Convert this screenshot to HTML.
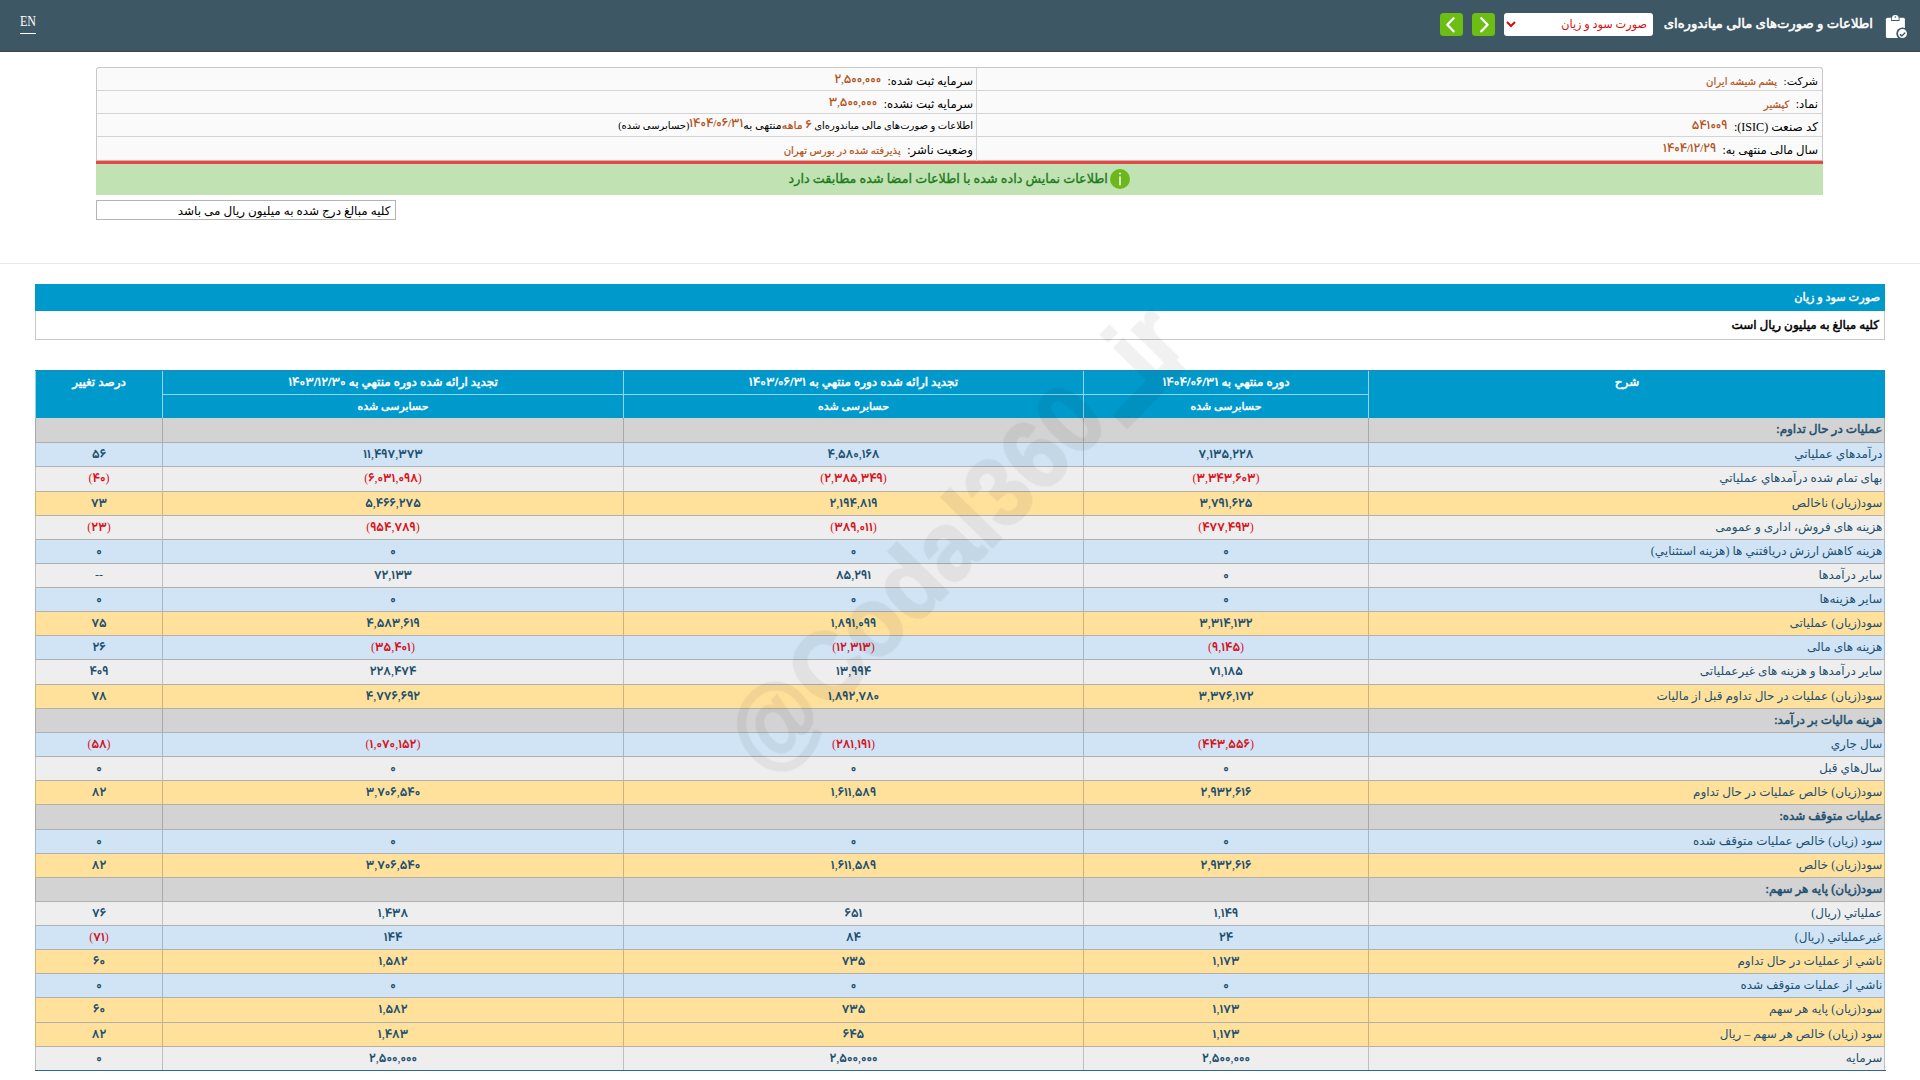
<!DOCTYPE html>
<html lang="fa" dir="rtl">
<head>
<meta charset="utf-8">
<title>صورت سود و زیان - پشم شیشه ایران</title>
<style>
html,body{margin:0;padding:0;background:#fff;}
body{width:1920px;height:1080px;position:relative;overflow:hidden;font-family:"Liberation Serif","DejaVu Sans",serif;font-size:12px;color:#000;direction:rtl;}
.abs{position:absolute;}
#hdr{position:absolute;left:0;top:0;width:1920px;height:52px;background:#3e5764;box-sizing:border-box;border-bottom:1px solid #38474f;}
#en{position:absolute;left:20px;top:14px;color:#fff;font-size:14px;width:16px;height:16px;line-height:16px;white-space:nowrap;direction:ltr;border-bottom:1px solid #fff;padding-bottom:3px;}
#ttl{position:absolute;left:1564px;width:309px;text-align:right;top:12px;color:#fff;font-size:13.2px;-webkit-text-stroke:0.53px #fff;line-height:24px;white-space:nowrap;}
#ico{position:absolute;left:1880px;top:10px;width:32px;height:32px;}
#sel{position:absolute;left:1504px;top:13px;width:149px;height:23px;box-sizing:border-box;background:#fff;border:0;border-radius:3px;color:#d80a0a;font-family:"Liberation Serif","DejaVu Sans",serif;font-size:11.25px;direction:rtl;padding:0 2px 1px 0;margin:0;}
.gb{position:absolute;top:13px;width:23px;height:23px;border-radius:3.5px;background:#6cbd14;}
.gb svg{position:absolute;left:0;top:0;}
#info{position:absolute;left:96px;top:67px;width:1727px;height:94px;box-sizing:border-box;border:1px solid #c8c8c8;border-bottom:1px solid #e0b0b0;border-radius:3px 3px 0 0;background:#fafafa;}
.ir{position:absolute;left:0;width:1725px;height:23px;border-bottom:1px solid #d4d4d4;box-sizing:border-box;}
.ic{position:absolute;top:0;height:100%;box-sizing:border-box;padding:1px 4px 0 4px;line-height:22px;white-space:nowrap;font-size:11.75px;}
.ic.r{right:0;width:846px;}
.ic.l{left:0;width:880px;border-right:0;}
#mid{position:absolute;left:879px;top:0;width:1px;height:93px;background:#d4d4d4;}
.v{color:#b4531a;font-size:10.15px;margin-right:1px;-webkit-text-stroke:0.2px #b4531a;}
.v .d{font-size:12.6px;font-weight:500;letter-spacing:0;-webkit-text-stroke:0;}
.vn{position:relative;top:-2px;}

.ic.l3{font-size:10px;}
.ic.l3 .v{margin:0;font-size:11px;}
.ic.l3 .k{font-size:11px;}
#red{position:absolute;left:96px;top:161px;width:1727px;height:3px;background:#e24a45;}
#grn{position:absolute;left:96px;top:164px;width:1727px;height:31px;background:#c1e2b3;color:#1b7a1b;font-size:12.72px;-webkit-text-stroke:0.32px #1b7a1b;line-height:30px;text-align:center;padding:0;box-sizing:border-box;white-space:nowrap;}
#note{position:absolute;left:96px;top:200px;width:300px;height:20px;box-sizing:border-box;border:1px solid #b4b4b4;line-height:20px;padding:0 4.5px;white-space:nowrap;font-size:12px;}
#hr{position:absolute;left:0;top:263px;width:1920px;height:1px;background:#e8e8e8;}
#sect{position:absolute;left:35px;top:284px;width:1850px;height:27px;background:#0099cc;color:#fff;font-size:11.25px;-webkit-text-stroke:0.46px #fff;line-height:27px;padding:0 5px;box-sizing:border-box;white-space:nowrap;}
#sub{position:absolute;left:35px;top:311px;width:1850px;height:29px;box-sizing:border-box;border:1px solid #c8c8c8;border-top:0;-webkit-text-stroke:0.49px #000;line-height:29px;padding:0 5px;white-space:nowrap;}
.thead{position:absolute;left:0;top:370px;width:1920px;height:48px;}
.thead:after{content:"";position:absolute;left:35px;top:0;width:1850px;height:1px;background:#2389b3;}
.th{position:absolute;box-sizing:border-box;background:#0099cc;color:#fff;-webkit-text-stroke:0.49px #fff;text-align:center;white-space:nowrap;border-left:1px solid #8fd6ee;line-height:24px;}
.th.h1{border-bottom:1px solid #8fd6ee;}
.th.h2{font-size:11px;-webkit-text-stroke:0.45px #fff;line-height:22px;}
.tr{position:absolute;left:35px;width:1851px;box-sizing:border-box;}
.td{position:absolute;top:0;height:100%;box-sizing:border-box;border-left:1px solid rgba(0,0,0,0.2);border-bottom:1px solid #b0b0b0;white-space:nowrap;color:#1d5070;line-height:22px;}
.td.lab{text-align:right;padding-right:1.6px;border-right:1px solid rgba(0,0,0,0.2);}
.td.num{text-align:center;direction:rtl;}
.td.neg{color:#d7141e;}
.tr.sec .td{background:#d3d3d3;-webkit-text-stroke:0.49px #1d5070;}
.tr.b .td{background:#d0e4f5;}
.tr.g .td{background:#eeeeee;}
.tr.y .td{background:#ffe19c;}
.tbottom{position:absolute;left:35px;top:1070px;width:1851px;height:1px;background:#2a6a8c;}
.wm{position:absolute;left:953.5px;top:538px;white-space:nowrap;direction:ltr;font-family:"Liberation Sans",sans-serif;font-weight:bold;font-size:91px;line-height:100px;color:#000;opacity:0.055;-webkit-text-stroke:2px #000;transform:translate(-50%,-50%) rotate(-45.6deg) scaleY(1.07);}

.d{font-family:"Vazirmatn","DejaVu Sans",sans-serif;font-size:12.5px;letter-spacing:0.2px;font-weight:700;-webkit-text-stroke:0;}
.th .d{font-size:12.75px;}
#en span{display:inline-block;transform-origin:0 50%;transform:scaleX(0.86);}
.us{-webkit-text-stroke:0;display:inline-block;transform:translate(10px,-7px) scale(1.6,5.5);transform-origin:0% 90%;}

</style>
</head>
<body>
<div id="hdr">
  <div id="en"><span>EN</span></div>
  <div class="gb" style="left:1440px"><svg width="23" height="23" viewBox="0 0 23 23"><path d="M13.6 5.3 L7.3 11.8 L13.6 18.3" fill="none" stroke="#fff" stroke-width="2.3" stroke-linecap="round" stroke-linejoin="round"/></svg></div>
  <div class="gb" style="left:1472px"><svg width="23" height="23" viewBox="0 0 23 23"><path d="M9.3 5.3 L15.6 11.8 L9.3 18.3" fill="none" stroke="#fff" stroke-width="2.3" stroke-linecap="round" stroke-linejoin="round"/></svg></div>
  <select id="sel"><option>صورت سود و زیان</option></select>
  <div id="ttl">اطلاعات و صورت‌های مالی میاندوره‌ای</div>
  <svg id="ico" viewBox="0 0 32 32"><rect x="5.9" y="7.7" width="19" height="20.4" rx="1.6" fill="#fff"/><path d="M11.1 11 V8.4 a4.2 4.2 0 0 1 8.4 0 V11 z" fill="#3e5764"/><path d="M11.9 10.1 V8.3 a3.4 3.4 0 0 1 6.8 0 V10.1 z" fill="#fff"/><circle cx="15.3" cy="7" r="0.75" fill="#3e5764"/><circle cx="22.5" cy="23.6" r="6.2" fill="#3e5764"/><circle cx="22.5" cy="23.6" r="4.5" fill="#fff"/><path d="M20.3 24.6 l1.5 1.3 l3 -2.8" fill="none" stroke="#3e5764" stroke-width="1.4" stroke-linecap="round" stroke-linejoin="round"/></svg>
</div>
<div id="info">
  <div class="ir" style="top:0"><div class="ic r" style="padding-top:1.5px"><span style="font-size:11px">شرکت:</span> <span class="v">&nbsp;پشم شیشه ایران</span></div><div class="ic l" style="padding-top:2.5px">سرمایه ثبت شده: <span class="v vn">&nbsp;<span class="d">۲</span>,<span class="d">۵۰۰</span>,<span class="d">۰۰۰</span></span></div></div>
  <div class="ir" style="top:23px"><div class="ic r" style="padding-top:2.5px">نماد: <span class="v">&nbsp;کپشیر</span></div><div class="ic l" style="padding-top:2.5px">سرمایه ثبت نشده: <span class="v vn">&nbsp;<span class="d">۳</span>,<span class="d">۵۰۰</span>,<span class="d">۰۰۰</span></span></div></div>
  <div class="ir" style="top:46px"><div class="ic r" style="padding-top:1.5px"><span style="font-size:12.1px">کد صنعت (ISIC):</span> <span class="v vn">&nbsp;<span class="d">۵۴۱۰۰۹</span></span></div><div class="ic l l3" style="padding-top:0px">اطلاعات و صورت‌های مالی میاندوره‌ای <span class="v"><span class="d">۶</span> ماهه</span>&zwnj;<span class="k">منتهی به</span><span class="v vn"><span class="d">۱۴۰۴</span>/<span class="d">۰۶</span>/<span class="d">۳۱</span></span>(حسابرسی شده)</div></div>
  <div class="ir" style="top:69px;border-bottom:0"><div class="ic r" style="padding-top:3px">سال مالی منتهی به: <span class="v vn">&nbsp;<span class="d">۱۴۰۴</span>/<span class="d">۱۲</span>/<span class="d">۲۹</span></span></div><div class="ic l" style="padding-top:3px">وضعیت ناشر: <span class="v">&nbsp;پذیرفته شده در بورس تهران</span></div></div>
  <div id="mid"></div>
</div>
<div id="red"></div>
<div id="grn"><svg width="20" height="20" viewBox="0 0 20 20" style="vertical-align:-6px;margin-left:2.5px"><circle cx="10" cy="10" r="10" fill="#6cb81c"/><rect x="9.3" y="7.3" width="1.4" height="9" fill="#fff"/><circle cx="10" cy="4.6" r="1" fill="#fff"/></svg>اطلاعات نمایش داده شده با اطلاعات امضا شده مطابقت دارد</div>
<div id="note">کلیه مبالغ درج شده به میلیون ریال می باشد</div>
<div id="hr"></div>
<div id="sect">صورت سود و زیان</div>
<div id="sub">کلیه مبالغ به میلیون ریال است</div>

<div class="thead">
<div class="th" style="left:1368px;width:517px;top:0;height:48px"><span>شرح</span></div>
<div class="th h1" style="left:1083px;width:285px;top:0;height:25px"><span>دوره منتهي به <span class="d">۱۴۰۴</span>/<span class="d">۰۶</span>/<span class="d">۳۱</span></span></div>
<div class="th h2" style="left:1083px;width:285px;top:25px;height:23px"><span>حسابرسی شده</span></div>
<div class="th h1" style="left:623px;width:460px;top:0;height:25px"><span>تجدید ارائه شده دوره منتهي به <span class="d">۱۴۰۳</span>/<span class="d">۰۶</span>/<span class="d">۳۱</span></span></div>
<div class="th h2" style="left:623px;width:460px;top:25px;height:23px"><span>حسابرسی شده</span></div>
<div class="th h1" style="left:162px;width:461px;top:0;height:25px"><span>تجدید ارائه شده دوره منتهي به <span class="d">۱۴۰۳</span>/<span class="d">۱۲</span>/<span class="d">۳۰</span></span></div>
<div class="th h2" style="left:162px;width:461px;top:25px;height:23px"><span>حسابرسی شده</span></div>
<div class="th" style="left:35px;width:127px;top:0;height:48px"><span>درصد تغییر</span></div>
</div>
<div class="tr sec" style="top:418px;height:25px">
<div class="td lab" style="left:1333px;width:517px">عملیات در حال تداوم:</div>
<div class="td num" style="left:1048px;width:285px"></div>
<div class="td num" style="left:588px;width:460px"></div>
<div class="td num" style="left:127px;width:461px"></div>
<div class="td num" style="left:0px;width:127px"></div>
</div>
<div class="tr b" style="top:443px;height:24px">
<div class="td lab" style="left:1333px;width:517px">درآمدهاي عملياتي</div>
<div class="td num" style="left:1048px;width:285px"><span class="d">۷</span>,<span class="d">۱۳۵</span>,<span class="d">۲۲۸</span></div>
<div class="td num" style="left:588px;width:460px"><span class="d">۴</span>,<span class="d">۵۸۰</span>,<span class="d">۱۶۸</span></div>
<div class="td num" style="left:127px;width:461px"><span class="d">۱۱</span>,<span class="d">۴۹۷</span>,<span class="d">۳۷۳</span></div>
<div class="td num" style="left:0px;width:127px"><span class="d">۵۶</span></div>
</div>
<div class="tr g" style="top:467px;height:25px">
<div class="td lab" style="left:1333px;width:517px">بهای تمام شده درآمدهاي عملياتي</div>
<div class="td num neg" style="left:1048px;width:285px">(<span class="d">۳</span>,<span class="d">۳۴۳</span>,<span class="d">۶۰۳</span>)</div>
<div class="td num neg" style="left:588px;width:460px">(<span class="d">۲</span>,<span class="d">۳۸۵</span>,<span class="d">۳۴۹</span>)</div>
<div class="td num neg" style="left:127px;width:461px">(<span class="d">۶</span>,<span class="d">۰۳۱</span>,<span class="d">۰۹۸</span>)</div>
<div class="td num neg" style="left:0px;width:127px">(<span class="d">۴۰</span>)</div>
</div>
<div class="tr y" style="top:492px;height:24px">
<div class="td lab" style="left:1333px;width:517px">سود(زيان) ناخالص</div>
<div class="td num" style="left:1048px;width:285px"><span class="d">۳</span>,<span class="d">۷۹۱</span>,<span class="d">۶۲۵</span></div>
<div class="td num" style="left:588px;width:460px"><span class="d">۲</span>,<span class="d">۱۹۴</span>,<span class="d">۸۱۹</span></div>
<div class="td num" style="left:127px;width:461px"><span class="d">۵</span>,<span class="d">۴۶۶</span>,<span class="d">۲۷۵</span></div>
<div class="td num" style="left:0px;width:127px"><span class="d">۷۳</span></div>
</div>
<div class="tr g" style="top:516px;height:24px">
<div class="td lab" style="left:1333px;width:517px">هزینه های فروش، اداری و عمومی</div>
<div class="td num neg" style="left:1048px;width:285px">(<span class="d">۴۷۷</span>,<span class="d">۴۹۳</span>)</div>
<div class="td num neg" style="left:588px;width:460px">(<span class="d">۳۸۹</span>,<span class="d">۰۱۱</span>)</div>
<div class="td num neg" style="left:127px;width:461px">(<span class="d">۹۵۴</span>,<span class="d">۷۸۹</span>)</div>
<div class="td num neg" style="left:0px;width:127px">(<span class="d">۲۳</span>)</div>
</div>
<div class="tr b" style="top:540px;height:24px">
<div class="td lab" style="left:1333px;width:517px">هزينه کاهش ارزش دريافتني ها (هزينه استثنايي)</div>
<div class="td num" style="left:1048px;width:285px"><span class="d">۰</span></div>
<div class="td num" style="left:588px;width:460px"><span class="d">۰</span></div>
<div class="td num" style="left:127px;width:461px"><span class="d">۰</span></div>
<div class="td num" style="left:0px;width:127px"><span class="d">۰</span></div>
</div>
<div class="tr g" style="top:564px;height:24px">
<div class="td lab" style="left:1333px;width:517px">سایر درآمدها</div>
<div class="td num" style="left:1048px;width:285px"><span class="d">۰</span></div>
<div class="td num" style="left:588px;width:460px"><span class="d">۸۵</span>,<span class="d">۲۹۱</span></div>
<div class="td num" style="left:127px;width:461px"><span class="d">۷۲</span>,<span class="d">۱۳۳</span></div>
<div class="td num" style="left:0px;width:127px">--</div>
</div>
<div class="tr b" style="top:588px;height:24px">
<div class="td lab" style="left:1333px;width:517px">سایر هزینه‌ها</div>
<div class="td num" style="left:1048px;width:285px"><span class="d">۰</span></div>
<div class="td num" style="left:588px;width:460px"><span class="d">۰</span></div>
<div class="td num" style="left:127px;width:461px"><span class="d">۰</span></div>
<div class="td num" style="left:0px;width:127px"><span class="d">۰</span></div>
</div>
<div class="tr y" style="top:612px;height:24px">
<div class="td lab" style="left:1333px;width:517px">سود(زيان) عملياتی</div>
<div class="td num" style="left:1048px;width:285px"><span class="d">۳</span>,<span class="d">۳۱۴</span>,<span class="d">۱۳۲</span></div>
<div class="td num" style="left:588px;width:460px"><span class="d">۱</span>,<span class="d">۸۹۱</span>,<span class="d">۰۹۹</span></div>
<div class="td num" style="left:127px;width:461px"><span class="d">۴</span>,<span class="d">۵۸۳</span>,<span class="d">۶۱۹</span></div>
<div class="td num" style="left:0px;width:127px"><span class="d">۷۵</span></div>
</div>
<div class="tr b" style="top:636px;height:24px">
<div class="td lab" style="left:1333px;width:517px">هزینه های مالی</div>
<div class="td num neg" style="left:1048px;width:285px">(<span class="d">۹</span>,<span class="d">۱۴۵</span>)</div>
<div class="td num neg" style="left:588px;width:460px">(<span class="d">۱۲</span>,<span class="d">۳۱۳</span>)</div>
<div class="td num neg" style="left:127px;width:461px">(<span class="d">۳۵</span>,<span class="d">۴۰۱</span>)</div>
<div class="td num" style="left:0px;width:127px"><span class="d">۲۶</span></div>
</div>
<div class="tr g" style="top:660px;height:25px">
<div class="td lab" style="left:1333px;width:517px">سایر درآمدها و هزینه های غیرعملیاتی</div>
<div class="td num" style="left:1048px;width:285px"><span class="d">۷۱</span>,<span class="d">۱۸۵</span></div>
<div class="td num" style="left:588px;width:460px"><span class="d">۱۳</span>,<span class="d">۹۹۴</span></div>
<div class="td num" style="left:127px;width:461px"><span class="d">۲۲۸</span>,<span class="d">۴۷۴</span></div>
<div class="td num" style="left:0px;width:127px"><span class="d">۴۰۹</span></div>
</div>
<div class="tr y" style="top:685px;height:24px">
<div class="td lab" style="left:1333px;width:517px">سود(زيان) عملیات در حال تداوم قبل از مالیات</div>
<div class="td num" style="left:1048px;width:285px"><span class="d">۳</span>,<span class="d">۳۷۶</span>,<span class="d">۱۷۲</span></div>
<div class="td num" style="left:588px;width:460px"><span class="d">۱</span>,<span class="d">۸۹۲</span>,<span class="d">۷۸۰</span></div>
<div class="td num" style="left:127px;width:461px"><span class="d">۴</span>,<span class="d">۷۷۶</span>,<span class="d">۶۹۲</span></div>
<div class="td num" style="left:0px;width:127px"><span class="d">۷۸</span></div>
</div>
<div class="tr sec" style="top:709px;height:24px">
<div class="td lab" style="left:1333px;width:517px">هزینه مالیات بر درآمد:</div>
<div class="td num" style="left:1048px;width:285px"></div>
<div class="td num" style="left:588px;width:460px"></div>
<div class="td num" style="left:127px;width:461px"></div>
<div class="td num" style="left:0px;width:127px"></div>
</div>
<div class="tr b" style="top:733px;height:24px">
<div class="td lab" style="left:1333px;width:517px">سال جاري</div>
<div class="td num neg" style="left:1048px;width:285px">(<span class="d">۴۴۳</span>,<span class="d">۵۵۶</span>)</div>
<div class="td num neg" style="left:588px;width:460px">(<span class="d">۲۸۱</span>,<span class="d">۱۹۱</span>)</div>
<div class="td num neg" style="left:127px;width:461px">(<span class="d">۱</span>,<span class="d">۰۷۰</span>,<span class="d">۱۵۲</span>)</div>
<div class="td num neg" style="left:0px;width:127px">(<span class="d">۵۸</span>)</div>
</div>
<div class="tr g" style="top:757px;height:24px">
<div class="td lab" style="left:1333px;width:517px">سال‌هاي قبل</div>
<div class="td num" style="left:1048px;width:285px"><span class="d">۰</span></div>
<div class="td num" style="left:588px;width:460px"><span class="d">۰</span></div>
<div class="td num" style="left:127px;width:461px"><span class="d">۰</span></div>
<div class="td num" style="left:0px;width:127px"><span class="d">۰</span></div>
</div>
<div class="tr y" style="top:781px;height:24px">
<div class="td lab" style="left:1333px;width:517px">سود(زيان) خالص عملیات در حال تداوم</div>
<div class="td num" style="left:1048px;width:285px"><span class="d">۲</span>,<span class="d">۹۳۲</span>,<span class="d">۶۱۶</span></div>
<div class="td num" style="left:588px;width:460px"><span class="d">۱</span>,<span class="d">۶۱۱</span>,<span class="d">۵۸۹</span></div>
<div class="td num" style="left:127px;width:461px"><span class="d">۳</span>,<span class="d">۷۰۶</span>,<span class="d">۵۴۰</span></div>
<div class="td num" style="left:0px;width:127px"><span class="d">۸۲</span></div>
</div>
<div class="tr sec" style="top:805px;height:25px">
<div class="td lab" style="left:1333px;width:517px">عملیات متوقف شده:</div>
<div class="td num" style="left:1048px;width:285px"></div>
<div class="td num" style="left:588px;width:460px"></div>
<div class="td num" style="left:127px;width:461px"></div>
<div class="td num" style="left:0px;width:127px"></div>
</div>
<div class="tr b" style="top:830px;height:24px">
<div class="td lab" style="left:1333px;width:517px">سود (زيان) خالص عملیات متوقف شده</div>
<div class="td num" style="left:1048px;width:285px"><span class="d">۰</span></div>
<div class="td num" style="left:588px;width:460px"><span class="d">۰</span></div>
<div class="td num" style="left:127px;width:461px"><span class="d">۰</span></div>
<div class="td num" style="left:0px;width:127px"><span class="d">۰</span></div>
</div>
<div class="tr y" style="top:854px;height:24px">
<div class="td lab" style="left:1333px;width:517px">سود(زيان) خالص</div>
<div class="td num" style="left:1048px;width:285px"><span class="d">۲</span>,<span class="d">۹۳۲</span>,<span class="d">۶۱۶</span></div>
<div class="td num" style="left:588px;width:460px"><span class="d">۱</span>,<span class="d">۶۱۱</span>,<span class="d">۵۸۹</span></div>
<div class="td num" style="left:127px;width:461px"><span class="d">۳</span>,<span class="d">۷۰۶</span>,<span class="d">۵۴۰</span></div>
<div class="td num" style="left:0px;width:127px"><span class="d">۸۲</span></div>
</div>
<div class="tr sec" style="top:878px;height:24px">
<div class="td lab" style="left:1333px;width:517px">سود(زيان) پايه هر سهم:</div>
<div class="td num" style="left:1048px;width:285px"></div>
<div class="td num" style="left:588px;width:460px"></div>
<div class="td num" style="left:127px;width:461px"></div>
<div class="td num" style="left:0px;width:127px"></div>
</div>
<div class="tr g" style="top:902px;height:24px">
<div class="td lab" style="left:1333px;width:517px">عملياتي (ریال)</div>
<div class="td num" style="left:1048px;width:285px"><span class="d">۱</span>,<span class="d">۱۴۹</span></div>
<div class="td num" style="left:588px;width:460px"><span class="d">۶۵۱</span></div>
<div class="td num" style="left:127px;width:461px"><span class="d">۱</span>,<span class="d">۴۳۸</span></div>
<div class="td num" style="left:0px;width:127px"><span class="d">۷۶</span></div>
</div>
<div class="tr b" style="top:926px;height:24px">
<div class="td lab" style="left:1333px;width:517px">غيرعملياتي (ریال)</div>
<div class="td num" style="left:1048px;width:285px"><span class="d">۲۴</span></div>
<div class="td num" style="left:588px;width:460px"><span class="d">۸۴</span></div>
<div class="td num" style="left:127px;width:461px"><span class="d">۱۴۴</span></div>
<div class="td num neg" style="left:0px;width:127px">(<span class="d">۷۱</span>)</div>
</div>
<div class="tr y" style="top:950px;height:24px">
<div class="td lab" style="left:1333px;width:517px">ناشي از عمليات در حال تداوم</div>
<div class="td num" style="left:1048px;width:285px"><span class="d">۱</span>,<span class="d">۱۷۳</span></div>
<div class="td num" style="left:588px;width:460px"><span class="d">۷۳۵</span></div>
<div class="td num" style="left:127px;width:461px"><span class="d">۱</span>,<span class="d">۵۸۲</span></div>
<div class="td num" style="left:0px;width:127px"><span class="d">۶۰</span></div>
</div>
<div class="tr b" style="top:974px;height:24px">
<div class="td lab" style="left:1333px;width:517px">ناشي از عمليات متوقف شده</div>
<div class="td num" style="left:1048px;width:285px"><span class="d">۰</span></div>
<div class="td num" style="left:588px;width:460px"><span class="d">۰</span></div>
<div class="td num" style="left:127px;width:461px"><span class="d">۰</span></div>
<div class="td num" style="left:0px;width:127px"><span class="d">۰</span></div>
</div>
<div class="tr y" style="top:998px;height:25px">
<div class="td lab" style="left:1333px;width:517px">سود(زيان) پايه هر سهم</div>
<div class="td num" style="left:1048px;width:285px"><span class="d">۱</span>,<span class="d">۱۷۳</span></div>
<div class="td num" style="left:588px;width:460px"><span class="d">۷۳۵</span></div>
<div class="td num" style="left:127px;width:461px"><span class="d">۱</span>,<span class="d">۵۸۲</span></div>
<div class="td num" style="left:0px;width:127px"><span class="d">۶۰</span></div>
</div>
<div class="tr y" style="top:1023px;height:24px">
<div class="td lab" style="left:1333px;width:517px">سود (زيان) خالص هر سهم – ریال</div>
<div class="td num" style="left:1048px;width:285px"><span class="d">۱</span>,<span class="d">۱۷۳</span></div>
<div class="td num" style="left:588px;width:460px"><span class="d">۶۴۵</span></div>
<div class="td num" style="left:127px;width:461px"><span class="d">۱</span>,<span class="d">۴۸۳</span></div>
<div class="td num" style="left:0px;width:127px"><span class="d">۸۲</span></div>
</div>
<div class="tr g" style="top:1047px;height:24px">
<div class="td lab" style="left:1333px;width:517px">سرمایه</div>
<div class="td num" style="left:1048px;width:285px"><span class="d">۲</span>,<span class="d">۵۰۰</span>,<span class="d">۰۰۰</span></div>
<div class="td num" style="left:588px;width:460px"><span class="d">۲</span>,<span class="d">۵۰۰</span>,<span class="d">۰۰۰</span></div>
<div class="td num" style="left:127px;width:461px"><span class="d">۲</span>,<span class="d">۵۰۰</span>,<span class="d">۰۰۰</span></div>
<div class="td num" style="left:0px;width:127px"><span class="d">۰</span></div>
</div>
<div class="tbottom"></div>
<div class="wm">@Codal360<span class="us">_</span>ir</div>
</body>
</html>
